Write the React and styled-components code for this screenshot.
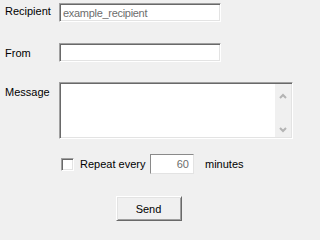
import React from 'react'
import styled, { createGlobalStyle } from 'styled-components'

const GlobalStyle = createGlobalStyle`
  html, body {
    margin: 0;
    padding: 0;
    background: #f0f0f0;
  }
  body {
    font-family: "Liberation Sans", Arial, sans-serif;
    font-size: 11px;
    color: #000;
  }
`

const App = () => {
  return (
    <>
      <GlobalStyle />
      <Form>
        <Row $mt={3}>
          <Label $pt={2}>Recipient</Label>
          <TextBox $w={162} $h={19} defaultValue="example_recipient" />
        </Row>
        <Row $mt={21}>
          <Label $pt={4}>From</Label>
          <TextBox $w={162} $h={19} defaultValue="" />
        </Row>
        <Row $mt={20}>
          <Label $pt={4}>Message</Label>
          <MessageBox>
            <MessageText />
            <ScrollBar>
              <Chevron viewBox="0 0 8 6">
                <polyline points="1,5 4,2 7,5" />
              </Chevron>
              <Chevron viewBox="0 0 8 6">
                <polyline points="1,1 4,4 7,1" />
              </Chevron>
            </ScrollBar>
          </MessageBox>
        </Row>
        <RepeatRow>
          <CheckBox />
          <RepeatText>Repeat every</RepeatText>
          <NumberBox defaultValue="60" />
          <Minutes>minutes</Minutes>
        </RepeatRow>
        <ButtonRow>
          <SendButton>Send</SendButton>
        </ButtonRow>
      </Form>
    </>
  )
}

export default App

const Form = styled.div`
display: flex;
flex-direction: column;
width: 297px;
height: 223px;
padding-left: 5px;
box-sizing: border-box;
`

const Row = styled.div`
display: flex;
align-items: flex-start;
margin-top: ${p => p.$mt}px;
`

const Label = styled.div`
width: 54px;
padding-top: ${p => p.$pt}px;
line-height: 13px;
`

const sunken = `
box-sizing: border-box;
background: #fff;
border-style: solid;
border-width: 1px;
border-color: #a0a0a0 #fff #fff #a0a0a0;
box-shadow: inset 1px 1px 0 #696969, inset -1px -1px 0 #e3e3e3;
`

const TextBox = styled.input`
${sunken}
width: ${p => p.$w}px;
height: ${p => p.$h}px;
padding: 0 0 0 3px;
margin: 0;
outline: none;
font-family: "Liberation Sans", Arial, sans-serif;
font-size: 11px;
letter-spacing: -0.3px;
color: #6d6d6d;
`

const MessageBox = styled.div`
${sunken}
display: flex;
width: 234px;
height: 57px;
padding: 1px;
`

const MessageText = styled.div`
flex: 1;
`

const ScrollBar = styled.div`
width: 16px;
background: #f0f0f0;
display: flex;
flex-direction: column;
justify-content: space-between;
align-items: center;
padding: 9px 0 4px;
`

const Chevron = styled.svg`
width: 8px;
height: 6px;
fill: none;
stroke: #b4b4b4;
stroke-width: 2;
`

const RepeatRow = styled.div`
display: flex;
align-items: center;
margin-top: 15px;
padding-left: 56px;
height: 20px;
`

const CheckBox = styled.div`
${sunken}
width: 13px;
height: 13px;
`

const RepeatText = styled.span`
margin-left: 6px;
width: 70px;
`

const NumberBox = styled.input`
box-sizing: border-box;
width: 44px;
height: 20px;
margin: 0;
padding: 0 4px 0 0;
outline: none;
text-align: right;
background: #fff;
border-style: solid;
border-width: 1px;
border-color: #8a8a8a #e3e3e3 #e3e3e3 #8a8a8a;
font-family: "Liberation Sans", Arial, sans-serif;
font-size: 11px;
color: #6d6d6d;
`

const Minutes = styled.span`
margin-left: 11px;
`

const ButtonRow = styled.div`
display: flex;
justify-content: center;
margin-top: 22px;
margin-left: -5px;
`

const SendButton = styled.button`
box-sizing: border-box;
width: 66px;
height: 25px;
margin: 0;
padding: 0;
background: #f0f0f0;
border-style: solid;
border-width: 1px;
border-color: #fff #696969 #696969 #fff;
box-shadow: inset 1px 1px 0 #e3e3e3, inset -1px -1px 0 #a0a0a0;
font-family: "Liberation Sans", Arial, sans-serif;
font-size: 11px;
color: #000;
`
